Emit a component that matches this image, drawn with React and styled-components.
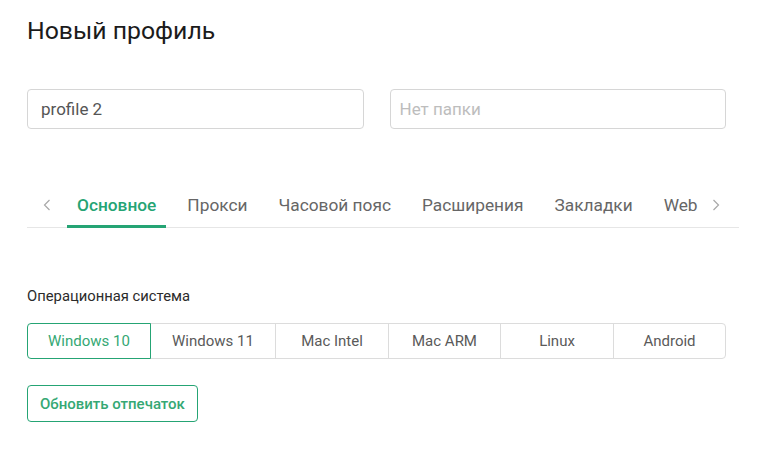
import React, { useState } from 'react';
import styled, { createGlobalStyle } from 'styled-components';

const GlobalStyle = createGlobalStyle`
    body {
        margin: 0;
        background: #ffffff;
        font-family: Roboto, "Liberation Sans", Arial, sans-serif;
        color: #222;
    }
`;

const GREEN = '#25a474';

const Page = styled.div`
    padding: 15px 27px 0;
    width: 712px;
`;

const Title = styled.h1`
    font-size: 24.8px;
    font-weight: 400;
    line-height: 32px;
    margin: 0 0 42px;
    color: #1b1b1b;
`;

const InputsRow = styled.div`
    display: grid;
    grid-template-columns: 1fr 1fr;
    gap: 26px;
    width: 699px;
`;

const TextInput = styled.input`
    box-sizing: border-box;
    height: 40px;
    border: 1px solid #d6d6d6;
    border-radius: 4px;
    padding: 0 ${p => (p.$compact ? '9px' : '13px')};
    font-family: inherit;
    font-size: 17px;
    color: #555;
    outline: none;

    &::placeholder {
        color: #bdbdbd;
    }
`;

const TabBar = styled.div`
    display: flex;
    align-items: stretch;
    height: 44px;
    margin-top: 54px;
    border-bottom: 1px solid #e6e6e6;
`;

const ArrowButton = styled.div`
    width: 40px;
    flex: none;
    display: flex;
    align-items: center;
    justify-content: ${p => (p.$side === 'left' ? 'center' : 'flex-start')};
    padding-left: ${p => (p.$side === 'left' ? '0' : '13px')};
    box-sizing: border-box;
    color: #a8a8a8;
`;

const TabList = styled.div`
    flex: 1;
    display: flex;
    gap: 11px;
    min-width: 0;
`;

const Tab = styled.div`
    position: relative;
    flex: none;
    display: flex;
    align-items: center;
    padding: 0 10px;
    font-size: 17.3px;
    white-space: nowrap;
    color: ${p => (p.$active ? GREEN : '#666666')};
    font-weight: ${p => (p.$active ? 500 : 400)};

    &::after {
        content: '';
        position: absolute;
        left: 0;
        right: 0;
        bottom: -1px;
        height: 3px;
        background: ${p => (p.$active ? GREEN : 'transparent')};
    }
`;

const Label = styled.div`
    margin-top: 58px;
    font-size: 14.8px;
    line-height: 20px;
    color: #2b2b2b;
`;

const Segments = styled.div`
    display: grid;
    grid-template-columns: 124fr 125fr 113fr 112fr 113fr 112fr;
    width: 699px;
    margin-top: 17px;
`;

const Segment = styled.div`
    box-sizing: border-box;
    height: 36px;
    display: flex;
    align-items: center;
    justify-content: center;
    font-size: 15px;
    color: ${p => (p.$active ? '#35a874' : '#5a5a5a')};
    border: 1px solid ${p => (p.$active ? GREEN : '#dcdcdc')};
    margin-left: -1px;
    position: relative;
    z-index: ${p => (p.$active ? 1 : 0)};

    &:first-child {
        margin-left: 0;
        border-radius: 4px 0 0 4px;
    }

    &:last-child {
        border-radius: 0 4px 4px 0;
    }
`;

const OutlineButton = styled.button`
    margin-top: 26px;
    height: 37px;
    padding: 0 12px;
    border: 1px solid ${GREEN};
    border-radius: 4px;
    background: #fff;
    color: #35a874;
    font-family: inherit;
    font-size: 15px;
    font-weight: 500;
`;

const Chevron = ({ dir }) => (
    <svg width="8" height="12" viewBox="0 0 8 12" fill="none">
        <path
            d={dir === 'left' ? 'M6.5 1 L1.5 6 L6.5 11' : 'M1.5 1 L6.5 6 L1.5 11'}
            stroke="currentColor"
            strokeWidth="1.2"
        />
    </svg>
);

const tabs = ['Основное', 'Прокси', 'Часовой пояс', 'Расширения', 'Закладки', 'Web'];
const systems = ['Windows 10', 'Windows 11', 'Mac Intel', 'Mac ARM', 'Linux', 'Android'];

const App = () => {
    const [tab] = useState(0);
    const [os, setOs] = useState(0);

    return (
        <Page>
            <GlobalStyle />
            <Title>Новый профиль</Title>
            <InputsRow>
                <TextInput defaultValue="profile 2" />
                <TextInput $compact placeholder="Нет папки" />
            </InputsRow>
            <TabBar>
                <ArrowButton $side="left"><Chevron dir="left" /></ArrowButton>
                <TabList>
                    {tabs.map((t, i) => (
                        <Tab key={t} $active={i === tab}>{t}</Tab>
                    ))}
                </TabList>
                <ArrowButton $side="right"><Chevron dir="right" /></ArrowButton>
            </TabBar>
            <Label>Операционная система</Label>
            <Segments>
                {systems.map((s, i) => (
                    <Segment key={s} $active={i === os} onClick={() => setOs(i)}>{s}</Segment>
                ))}
            </Segments>
            <OutlineButton>Обновить отпечаток</OutlineButton>
        </Page>
    );
};

export default App;
